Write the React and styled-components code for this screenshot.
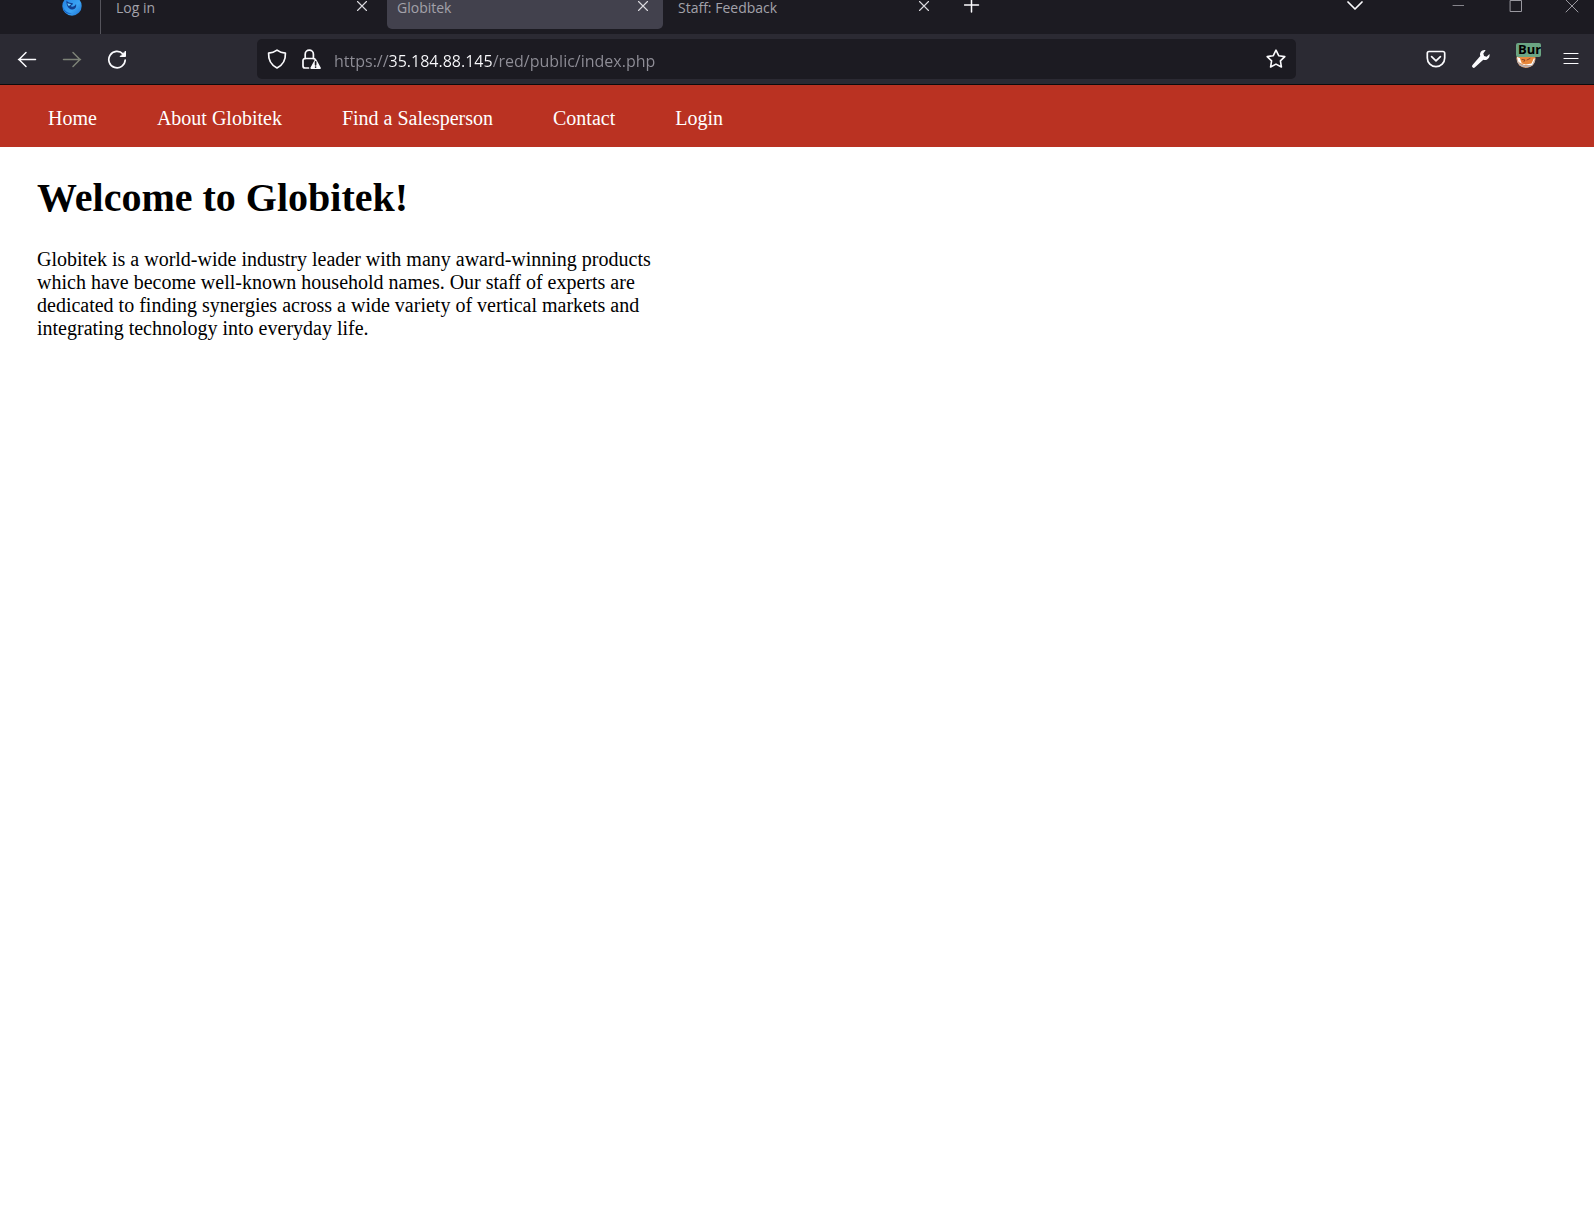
import React from "react";
import styled, { createGlobalStyle } from "styled-components";

const GlobalStyle = createGlobalStyle`
  * { box-sizing: border-box; }
  body { margin: 0; background: #fff; color: #000; }
`;

const uiFont = '"Open Sans", "Noto Sans", sans-serif';
const pageFont = '"Liberation Serif", "Times New Roman", serif';

const Chrome = styled.header`
  background: #2b2a33;
  border-bottom: 1px solid #0c0c0d;
  font-family: ${uiFont};
`;

const TabStrip = styled.div`
  display: flex;
  align-items: flex-end;
  height: 34px;
  padding: 0 0 5px 52px;
  background: #1c1b22;
  overflow: hidden;
`;

const IconButton = styled.button`
  display: flex;
  flex: none;
  align-items: center;
  justify-content: center;
  width: ${(p) => p.$width || 40}px;
  height: ${(p) => (p.$strip ? 46 : 40)}px;
  padding: 0;
  border: 0;
  background: none;
  color: ${(p) => p.$color || "#fbfbfe"};
`;

const Separator = styled.div`
  align-self: stretch;
  width: 1px;
  margin: 0 5px -5px 8px;
  background: #55545c;
`;

const Tabs = styled.div`
  display: flex;
  align-items: flex-end;
  gap: 5px;
`;

const Tab = styled.div`
  display: flex;
  align-items: center;
  justify-content: space-between;
  width: 276px;
  height: 46px;
  padding-left: 10px;
  border-radius: 5px;
  background: ${(p) => (p.$active ? "#42414d" : "transparent")};
`;

const TabTitle = styled.button`
  flex: 1;
  padding: 4px 0 0;
  border: 0;
  background: none;
  color: #a3a2aa;
  font: 14px/20px ${uiFont};
  text-align: left;
`;

const WindowControls = styled.div`
  display: flex;
  gap: 13px;
  margin-left: 61px;
`;

const Spacer = styled.div`
  flex: 1;
`;

const Toolbar = styled.div`
  display: flex;
  align-items: center;
  gap: 5px;
  height: 50px;
  padding: 0 3px 0 7px;
`;

const AddressBar = styled.form`
  display: flex;
  flex: 1;
  align-items: center;
  height: 40px;
  margin: 0 115px;
  border-radius: 5px;
  background: #1c1b22;
`;

const AddressIcons = styled.div`
  display: flex;
  gap: 14px;
  padding: 0 13px 0 10px;
`;

const AddressInput = styled.input`
  flex: 1;
  min-width: 0;
  height: 40px;
  padding: 3px 0 0;
  border: 0;
  outline: 0;
  font: 16px/24px ${uiFont};
  color: #8f8e97;
  background: linear-gradient(90deg, #8f8e97 55px, #fbfbfe 55px, #fbfbfe 158px, #8f8e97 158px);
  -webkit-background-clip: text;
  background-clip: text;
  -webkit-text-fill-color: transparent;
`;

const Extension = styled.span`
  position: relative;
  display: block;
  width: 20px;
  height: 20px;
`;

const Badge = styled.span`
  position: absolute;
  top: -6px;
  left: 0;
  width: 25px;
  height: 14px;
  padding-left: 2px;
  border-radius: 2px;
  overflow: hidden;
  background: #6ba583;
  color: #000;
  font: bold 13px/13px ${uiFont};
  text-align: left;
`;

const SiteNav = styled.nav`
  background: #ba3222;
  font: 20px/23px ${pageFont};
`;

const NavList = styled.ul`
  display: flex;
  flex-wrap: wrap;
  gap: 0 60px;
  margin: 0;
  padding: 22px 48px 17px;
  list-style: none;
`;

const NavLink = styled.a`
  color: #fff;
  text-decoration: none;
`;

const Content = styled.main`
  padding: 28px 37px;
  font: 20px/23px ${pageFont};
`;

const Title = styled.h1`
  margin: 0 0 27px;
  font-size: 40px;
  line-height: 46px;
`;

const Intro = styled.p`
  max-width: 625px;
  margin: 0;
`;

const Svg = ({ w = 20, h = w, sw = 1.5, children }) => (
  <svg
    width={w}
    height={h}
    viewBox={`0 0 ${w} ${h}`}
    fill="none"
    stroke="currentColor"
    strokeWidth={sw}
    strokeLinecap="round"
    strokeLinejoin="round"
    aria-hidden="true"
  >
    {children}
  </svg>
);

const FirefoxIcon = () => (
  <Svg w={20} sw={0}>
    <defs>
      <linearGradient id="orb" x1="0" y1="0" x2="1" y2="1">
        <stop offset="0" stopColor="#1f7fe0" />
        <stop offset="0.6" stopColor="#3ba4f5" />
        <stop offset="1" stopColor="#1c6fd0" />
      </linearGradient>
    </defs>
    <circle cx="10" cy="10" r="9.7" fill="url(#orb)" />
    <path d="M4.500 4.500c1 1.500 2.500 2.500 5 2.500 1.500 0 2 .8 1 1.600L8.500 10c1.500 1.300 4 .8 5.500-2 1 3.500-1.500 5.800-4.300 5.500C6.500 13.200 4 9 4.500 4.500z" fill="#123f91" />
    <path d="M5.500 7c1 .8 2.200 1.100 3.700 1L7 10C6 9.300 5.500 8.300 5.500 7z" fill="#6fd0fb" />
    <path d="M1 11c1.200 4 5 6.300 9 6.100-4 2.200-8.800-1-9-6.100z" fill="#1763c4" />
  </Svg>
);

const CloseIcon = () => (
  <Svg w={12} sw={1.1}>
    <path d="M1.500 1.500l9 9M10.500 1.500l-9 9" />
  </Svg>
);

const ArrowIcon = ({ forward }) => (
  <Svg w={20} sw={1.5}>
    {forward ? (
      <path d="M1.500 10.500h17M11 3.500l7 7-7 7" />
    ) : (
      <path d="M18.500 10.500h-17M9 3.500l-7 7 7 7" />
    )}
  </Svg>
);

const ReloadIcon = () => (
  <Svg w={20} sw={1.700}>
    <path d="M16 5A8.200 8.200 0 1 0 18.200 11" />
    <path d="M18.500 2.500v5h-5z" fill="currentColor" strokeWidth="1" />
  </Svg>
);

const ShieldIcon = () => (
  <Svg w={20} sw={1.700}>
    <path d="M10 1.100C7.500 3 4.500 3.900 1.600 4.100c-.3 6 2 11.600 8.400 14.900 6.400-3.300 8.700-8.900 8.400-14.900C15.500 3.900 12.500 3 10 1.100z" />
  </Svg>
);

const LockIcon = () => (
  <Svg w={20} sw={1.700}>
    <path d="M7.500 19H4a2 2 0 0 1-2-2v-5.500a2 2 0 0 1 2-2h8.500a2 2 0 0 1 1.600.8" />
    <path d="M4.200 9.500V5.300a4.100 4.100 0 0 1 8.200 0v4.200" />
    <path d="M14.600 11l4.500 8.100h-9z" fill="currentColor" strokeWidth="1.600" />
    <path d="M14.600 12.800v3M14.600 18v.1" stroke="#1c1b22" />
  </Svg>
);

const StarIcon = () => (
  <Svg w={20} sw={1.600}>
    <path d="M10 1.200l2.700 5.500 6.100.9-4.400 4.300 1 6.100L10 15.100 4.600 18l1-6.100L1.200 7.600l6.100-.9z" />
  </Svg>
);

const PocketIcon = () => (
  <Svg w={20} sw={1.700}>
    <path d="M3 2.500h14a1.700 1.700 0 0 1 1.700 1.700V9a8.700 8.700 0 0 1-17.400 0V4.200A1.700 1.700 0 0 1 3 2.500z" />
    <path d="M5.600 7.700l4.400 4.100 4.400-4.100" />
  </Svg>
);

const WrenchIcon = () => (
  <Svg w={20} sw={0}>
    <path
      fill="currentColor"
      d="M14.600 1.200c-3.500-.8-6.400 2.300-5.300 5.800L1.500 15.900a1.700 1.700 0 1 0 2.500 2.400L12.300 10.800c3.600 1.100 7-2 6.200-5.900l-2.900 2.800-2.500-.8-.8-2.500z"
    />
  </Svg>
);

const BurgerIcon = () => (
  <Svg w={20} sw={0}>
    <circle cx="10" cy="9.500" r="9.500" fill="#e8873a" />
    <path d="M.8 8c.5 5 3.500 8 9.200 8.500C15.500 16.500 18.800 13 19.200 8v3.500c-.8 4.500-4.500 7-9.200 7S1.300 15.500.8 11z" fill="#b9b2b5" />
    <path d="M.800 8l3 1 2 5.500 4 1 5.700-1L18 9l.8 1-2.800 6H8L2.500 13z" fill="#fff" />
    <path d="M6 10.500l3 .5-1 1.500M11 11l3-1.500" stroke="#8c4326" strokeWidth="1" />
  </Svg>
);

const tabs = [
  { title: "Log in" },
  { title: "Globitek", active: true },
  { title: "Staff: Feedback" },
];

const links = ["Home", "About Globitek", "Find a Salesperson", "Contact", "Login"];

export default function App() {
  return (
    <>
      <GlobalStyle />
      <Chrome>
        <TabStrip>
          <IconButton $strip aria-label="Firefox view"><FirefoxIcon /></IconButton>
          <Separator />
          <Tabs>
            {tabs.map((tab) => (
              <Tab key={tab.title} $active={tab.active}>
                <TabTitle>{tab.title}</TabTitle>
                <IconButton $strip $color="#dcdbe0" aria-label={`Close ${tab.title}`}><CloseIcon /></IconButton>
              </Tab>
            ))}
            <IconButton $strip $width={46} aria-label="New tab">
              <Svg w={16}><path d="M7.500 0v14M.5 7h14" /></Svg>
            </IconButton>
          </Tabs>
          <Spacer />
          <IconButton $strip aria-label="List all tabs">
            <Svg w={16} sw={1.700}><path d="M1 4l7 7 7-7" /></Svg>
          </IconButton>
          <WindowControls>
            <IconButton $strip $width={44} $color="#85848b" aria-label="Minimize">
              <Svg w={12} sw={1}><path d="M1 5.500h11" /></Svg>
            </IconButton>
            <IconButton $strip $width={44} $color="#9a99a0" aria-label="Maximize">
              <Svg w={14} sw={1}><path d="M2.500 1.500h11v11h-11z" /></Svg>
            </IconButton>
            <IconButton $strip $width={44} $color="#9a99a0" aria-label="Close window">
              <Svg w={14} sw={1}><path d="M1 1l12 12M13 1L1 13" /></Svg>
            </IconButton>
          </WindowControls>
        </TabStrip>
        <Toolbar>
          <IconButton aria-label="Back"><ArrowIcon /></IconButton>
          <IconButton $color="#7d8277" aria-label="Forward"><ArrowIcon forward /></IconButton>
          <IconButton aria-label="Reload"><ReloadIcon /></IconButton>
          <AddressBar onSubmit={(e) => e.preventDefault()}>
            <AddressIcons>
              <IconButton type="button" $width={20} aria-label="Tracking protection"><ShieldIcon /></IconButton>
              <IconButton type="button" $width={20} aria-label="Connection not secure"><LockIcon /></IconButton>
            </AddressIcons>
            <AddressInput
              aria-label="Address"
              spellCheck="false"
              defaultValue="https://35.184.88.145/red/public/index.php"
            />
            <IconButton type="button" aria-label="Bookmark"><StarIcon /></IconButton>
          </AddressBar>
          <IconButton aria-label="Save to Pocket"><PocketIcon /></IconButton>
          <IconButton aria-label="Tools"><WrenchIcon /></IconButton>
          <IconButton aria-label="Proxy extension">
            <Extension>
              <BurgerIcon />
              <Badge>Burp</Badge>
            </Extension>
          </IconButton>
          <IconButton aria-label="Menu">
            <Svg w={16} sw={1.200}><path d="M1 2.500h14M1 7.500h14M1 12.500h14" /></Svg>
          </IconButton>
        </Toolbar>
      </Chrome>
      <SiteNav>
        <NavList>
          {links.map((label) => (
            <li key={label}><NavLink href="#">{label}</NavLink></li>
          ))}
        </NavList>
      </SiteNav>
      <Content>
        <Title>Welcome to Globitek!</Title>
        <Intro>
          Globitek is a world-wide industry leader with many award-winning products
          which have become well-known household names. Our staff of experts are
          dedicated to finding synergies across a wide variety of vertical markets and
          integrating technology into everyday life.
        </Intro>
      </Content>
    </>
  );
}
